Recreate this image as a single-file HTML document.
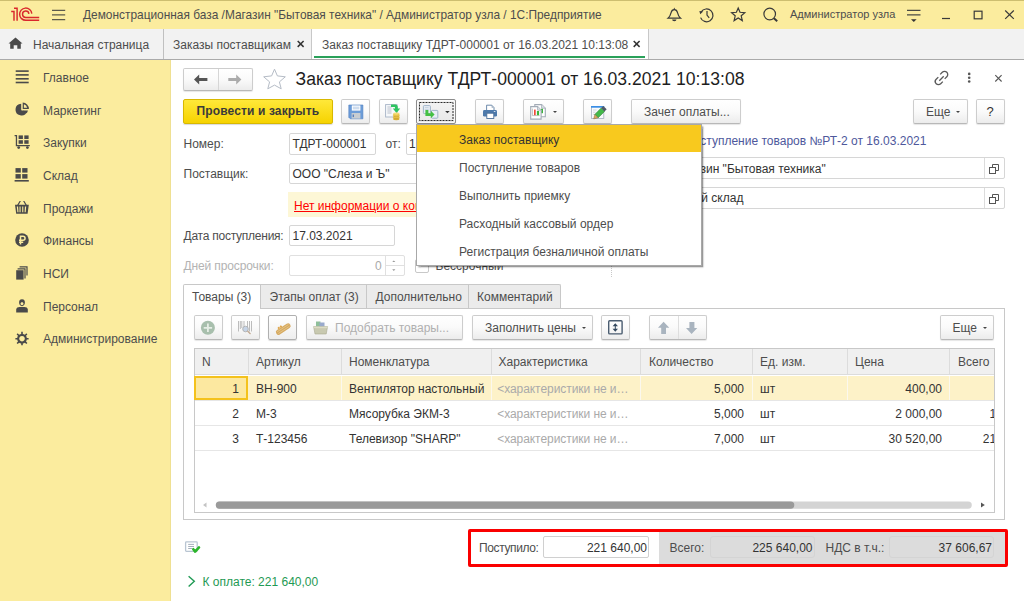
<!DOCTYPE html>
<html><head><meta charset="utf-8">
<style>
*{box-sizing:border-box}
html,body{margin:0;padding:0}
body{width:1024px;height:601px;overflow:hidden;position:relative;background:#fff;font-family:"Liberation Sans",sans-serif;font-size:12px;color:#4d4d4d}
.a{position:absolute}
.t{position:absolute;white-space:nowrap;line-height:14px}
svg{position:absolute;overflow:visible}
#top{left:0;top:0;width:1024px;height:29px;background:#fbec9e;border-top:1px solid #cdbe70}
#tabs{left:0;top:29px;width:1024px;height:31px;background:#f2f2f2;border-bottom:1px solid #aaa}
#side{left:0;top:60px;width:171px;height:541px;background:#fbec9e;border-right:1px solid #efe092}
.btn{position:absolute;background:linear-gradient(#fff 0%,#fafafa 50%,#ececec 100%);border:1px solid #cdcdcd;border-bottom-color:#b8b8b8;border-radius:2px;box-shadow:0 1px 1px rgba(0,0,0,.10)}
.inp{position:absolute;background:#fff;border:1px solid #d6d6d6;border-radius:2px}
.dd{position:absolute;width:0;height:0;border-left:2.3px solid transparent;border-right:2.3px solid transparent;border-top:2.4px solid #444}
.sitem{position:absolute;left:43px;white-space:nowrap;line-height:14px;color:#4d4d4d}
</style></head><body>

<!-- TOP BAR -->
<div id="top" class="a"></div>
<svg style="left:0;top:0" width="45" height="29" viewBox="0 0 45 29">
  <g fill="none" stroke="#d9272c" stroke-width="1.45">
    <path d="M11.2 11.4 H14 V20.8"/>
    <path d="M14 8.3 H17.1 V20.8"/>
    <path d="M31.8 13.6 A6.1 6.1 0 1 0 25.8 20.3 H39.2"/>
    <path d="M28.9 13.8 A3.2 3.2 0 1 0 25.8 17.4 H39.2"/>
  </g>
</svg>
<svg style="left:0;top:0" width="70" height="29" viewBox="0 0 70 29">
  <g stroke="#5c5a4c" stroke-width="1.3"><path d="M52 10.3H65.2M52 14.9H65.2M52 19.7H65.2"/></g>
</svg>
<div class="t" style="left:83px;top:8px;font-size:11.9px;color:#4d4d4d">Демонстрационная база /Магазин "Бытовая техника" / Администратор узла / 1С:Предприятие</div>

<!-- top right icons -->
<svg style="left:660px;top:0" width="130" height="29" viewBox="660 0 130 29">
  <g fill="none" stroke="#3a3a3a" stroke-width="1.2">
    <!-- bell -->
    <path d="M674.3 9.6 C672.3 9.6 671.5 10.8 671.1 12.6 C670.5 15.3 669.7 16.7 668 18.2 H680.6 C678.9 16.7 678.1 15.3 677.5 12.6 C677.1 10.8 676.3 9.6 674.3 9.6Z"/>
    <!-- history -->
    <path d="M701.2 11.9 A6.4 6.4 0 1 1 700.6 17.6"/>
    <path d="M707 10.9 V15.1 L709.2 17.8"/>
    <!-- star -->
    <path d="M738.2 8 L740 12.3 L744.8 12.7 L741.2 15.8 L742.3 20.6 L738.2 18 L734.1 20.6 L735.2 15.8 L731.6 12.7 L736.4 12.3Z"/>
    <!-- search -->
    <circle cx="769.7" cy="14" r="5.8"/>
    <path d="M773.9 18.2 L777.2 21.3" stroke-width="2"/>
  </g>
  <path d="M699.4 10.9 L703.2 11.6 L700.2 14.2Z" fill="#3a3a3a"/><path d="M674.3 7.6 L675.2 9.6 H673.4Z M672.1 19.6 H676.5 A2.2 1.6 0 0 1 672.1 19.6Z" fill="#3a3a3a"/>
</svg>
<div class="t" style="left:790px;top:6.8px;font-size:11px;color:#4d4d4d">Администратор узла</div>
<svg style="left:900px;top:0" width="124" height="29" viewBox="900 0 124 29">
  <g fill="none" stroke="#4a4a44" stroke-width="1.2">
    <path d="M907 10.3 H920.5 M907 14.8 H920.5"/>
  </g>
  <path d="M911 19.2 H916.6 L913.8 22Z" fill="#333"/>
  <g fill="none" stroke="#3a3a3a" stroke-width="1.2">
    <path d="M942 18.5 H950"/>
    <rect x="974.2" y="11.2" width="7.8" height="7.6"/>
    <path d="M1005.2 10.5 L1013.8 18.9 M1013.8 10.5 L1005.2 18.9"/>
  </g>
</svg>

<!-- TAB BAR -->
<div id="tabs" class="a"></div>
<svg style="left:0;top:29px" width="30" height="30" viewBox="0 29 30 30">
  <path d="M15.5 37.6 L22.5 43.4 H20.8 V48.7 H17.3 V45.2 H13.7 V48.7 H10.2 V43.4 H8.5Z" fill="#4a4a4a"/>
</svg>
<div class="t" style="left:33px;top:38px;color:#4d4d4d">Начальная страница</div>
<div class="a" style="left:163px;top:29px;width:1px;height:30px;background:#c0c0c0"></div>
<div class="t" style="left:173px;top:38px;color:#4d4d4d">Заказы поставщикам</div>
<svg style="left:295px;top:38px" width="12" height="12" viewBox="0 0 12 12"><path d="M2.7 3 L8.6 8.9 M8.6 3 L2.7 8.9" stroke="#333" stroke-width="1.5"/></svg>
<div class="a" style="left:311px;top:29px;width:338px;height:30px;background:#fff;border-left:1px solid #c8c8c8;border-right:1px solid #c8c8c8"></div>
<div class="a" style="left:314px;top:56px;width:331px;height:2px;background:#2aa15a"></div>
<div class="t" style="left:322px;top:38px;color:#4d4d4d">Заказ поставщику ТДРТ-000001 от 16.03.2021 10:13:08</div>
<svg style="left:631px;top:38px" width="12" height="12" viewBox="0 0 12 12"><path d="M2.7 3 L8.6 8.9 M8.6 3 L2.7 8.9" stroke="#333" stroke-width="1.5"/></svg>

<!-- SIDEBAR -->
<div id="side" class="a"></div>
<svg style="left:0;top:60px" width="40" height="300" viewBox="0 60 40 300">
  <g fill="#4a4a4a">
    <!-- Главное -->
    <rect x="15.7" y="70.3" width="13" height="1.6"/>
    <rect x="15.7" y="74.1" width="13" height="1.6"/>
    <rect x="15.7" y="78" width="13" height="1.6"/>
    <rect x="15.7" y="81.7" width="13" height="1.6"/>
    <!-- Маркетинг -->
    <path d="M21.2 103.7 A5.9 5.9 0 1 0 27 111.5 L21.2 110.2Z"/>
    <path d="M22.7 102.6 V109 H28.9 A6.4 6.4 0 0 0 22.7 102.6Z M23.9 104.2 A5 5 0 0 1 27.2 107.8 H23.9Z" fill-rule="evenodd"/>
    <path d="M22.6 110.6 L27.9 110.6 A6 6 0 0 1 26.6 113.2Z"/>
    <!-- Закупки -->
    <path d="M14.6 135 H17.1 V145 H29.8 V146.3 H15.8 V136.2 H14.6Z"/>
    <rect x="18.6" y="135.4" width="4.3" height="3.6"/>
    <rect x="24.3" y="135.4" width="4.3" height="3.6"/>
    <rect x="18.6" y="140.2" width="4.3" height="3.6"/>
    <rect x="24.3" y="140.2" width="4.3" height="3.6"/>
    <circle cx="18.7" cy="147.6" r="1.4"/>
    <circle cx="27.4" cy="147.6" r="1.4"/>
    <!-- Склад -->
    <rect x="15.5" y="168.1" width="5.3" height="4.5"/>
    <rect x="22.2" y="168.1" width="5.3" height="4.5"/>
    <rect x="15.5" y="174.1" width="5.3" height="4.5"/>
    <rect x="22.2" y="174.1" width="5.3" height="4.5"/>
    <rect x="14.6" y="180" width="14.2" height="1.6"/>
    <!-- Продажи -->
    <path d="M15 204.8 H28.8 L27.6 213.7 H16.2Z M16.8 206.4 L17.4 212.2 H18.5 L18.1 206.4Z M19.5 206.4 V212.2 H20.6 V206.4Z M22.2 206.4 V212.2 H23.3 V206.4Z M24.9 206.4 L24.6 212.2 H25.7 L26.2 206.4Z" fill-rule="evenodd"/>
    <path d="M17.2 204.9 L19.6 200.9 H20.9 L18.6 204.9Z M25.4 204.9 L23.1 200.9 H24.4 L26.8 204.9Z"/>
    <!-- Финансы -->
    <circle cx="22" cy="240" r="6.8"/>
    <!-- НСИ -->
    <rect x="16.2" y="270.2" width="7.4" height="9.4"/>
    <path d="M17.6 268.2 H25.6 V278.6 H24.4 V269.4 H17.6Z"/>
    <path d="M19.6 266.2 H27.6 V275.6 H26.4 V267.4 H19.6Z"/>
    <!-- Персонал -->
    <path d="M22 299.3 C19.6 299.3 19.1 301 19.1 302.6 C19.1 304.6 20.3 306.2 22 306.2 C23.7 306.2 24.9 304.6 24.9 302.6 C24.9 301 24.4 299.3 22 299.3Z M22 302.2 C23 302.2 23.5 302.9 23.5 303.6 C23.5 304.7 22.8 305.2 22 305.2 C21.2 305.2 20.5 304.7 20.5 303.6 C20.5 302.9 21 302.2 22 302.2Z" fill-rule="evenodd"/>
    <path d="M16.2 312.4 V309.5 C16.2 307.8 18 307 19.5 307 H24.5 C26 307 27.8 307.8 27.8 309.5 V312.4Z"/>
    <!-- Администрирование -->
    <path d="M21.2 331.8 H22.8 V333.9 A4.6 4.6 0 0 1 24.9 334.7 L26.3 333.3 L27.4 334.4 L26 335.8 A4.6 4.6 0 0 1 26.8 337.9 H28.6 V339.5 H26.8 A4.6 4.6 0 0 1 26 341.6 L27.4 343 L26.3 344.1 L24.9 342.7 A4.6 4.6 0 0 1 22.8 343.5 V345.3 H21.2 V343.5 A4.6 4.6 0 0 1 19.1 342.7 L17.7 344.1 L16.6 343 L18 341.6 A4.6 4.6 0 0 1 17.2 339.5 H15.4 V337.9 H17.2 A4.6 4.6 0 0 1 18 335.8 L16.6 334.4 L17.7 333.3 L19.1 334.7 A4.6 4.6 0 0 1 21.2 333.9Z M22 335.9 A2.8 2.8 0 1 0 22.01 335.9Z" fill-rule="evenodd"/>
  </g>
  <g fill="none" stroke="#fbec9e" stroke-width="1.5">
    <path d="M20.5 244.6 V236.2 H23 A2.05 2.05 0 0 1 23 240.3 H19 M19 242.3 H23.2"/>
  </g>
</svg>
<div class="sitem" style="top:71px">Главное</div>
<div class="sitem" style="top:103.5px">Маркетинг</div>
<div class="sitem" style="top:136px">Закупки</div>
<div class="sitem" style="top:169px">Склад</div>
<div class="sitem" style="top:201.5px">Продажи</div>
<div class="sitem" style="top:234px">Финансы</div>
<div class="sitem" style="top:267px">НСИ</div>
<div class="sitem" style="top:299.5px">Персонал</div>
<div class="sitem" style="top:332px">Администрирование</div>

<!-- FORM -->
<!-- nav buttons -->
<div class="btn" style="left:183px;top:68px;width:70px;height:23px"></div>
<div class="a" style="left:218px;top:69px;width:1px;height:21px;background:#d6d6d6"></div>
<svg style="left:190px;top:70px" width="60" height="20" viewBox="190 70 60 20">
  <path d="M194 79.4 L199.2 74.4 V78 H207.4 V80.9 H199.2 V84.4Z" fill="#555"/>
  <path d="M241.4 79.4 L236.2 74.4 V78 H228.3 V80.9 H236.2 V84.4Z" fill="#ababab"/>
</svg>
<svg style="left:260px;top:66px" width="30" height="26" viewBox="260 66 30 26">
  <path d="M274.5 69.2 L277.4 75.9 L285.3 76.8 L279.4 81.9 L281.2 88.8 L274.5 85.1 L267.8 88.8 L269.6 81.9 L263.7 76.8 L271.6 75.9Z" fill="none" stroke="#b5bcc6" stroke-width="1"/>
</svg>
<div class="t" style="left:295.5px;top:69px;font-size:17.6px;line-height:20px;color:#1e1e1e">Заказ поставщику ТДРТ-000001 от 16.03.2021 10:13:08</div>
<svg style="left:930px;top:66px" width="80" height="24" viewBox="930 66 80 24">
  <g fill="none" stroke="#5a5a5a" stroke-width="1.3">
    <path d="M940.2 74.4 L942.3 72.3 A2.6 2.6 0 0 1 946.8 76.8 L944.7 78.9"/>
    <path d="M942.8 81.6 L940.7 83.7 A2.6 2.6 0 0 1 936.2 79.2 L938.3 77.1"/>
    <path d="M939.3 80.7 L943.7 76.3"/>
    <path d="M995.3 75.2 L1001.6 81.5 M1001.6 75.2 L995.3 81.5" stroke="#555" stroke-width="1.1"/>
  </g>
  <g fill="#555"><circle cx="969.2" cy="73.9" r="1.3"/><circle cx="969.2" cy="77.7" r="1.3"/><circle cx="969.2" cy="81.5" r="1.3"/></g>
</svg>

<!-- command bar -->
<div class="a" style="left:183px;top:99px;width:150px;height:25px;border:1px solid #d8b800;border-radius:2px;background:linear-gradient(#ffe83a,#f6d300);box-shadow:0 1px 1px rgba(0,0,0,.15)"></div>
<div class="t" style="left:196.5px;top:104px;font-weight:bold;color:#3a3a3a;letter-spacing:0.13px">Провести и закрыть</div>

<div class="btn" style="left:341px;top:99px;width:29px;height:25px"></div>
<svg style="left:348px;top:104px" width="16" height="16" viewBox="348 104 16 16">
  <path d="M348.8 105 H362.9 V118.8 H350.3 L348.8 117.3Z" fill="#6c9cd8" stroke="#4f7fc0" stroke-width="0.6"/>
  <rect x="351.8" y="105.4" width="8.6" height="5.2" fill="#fff"/>
  <path d="M352.8 107.2 H359.4 M352.8 108.8 H359.4" stroke="#9bb8dc" stroke-width="0.7"/>
  <rect x="351.6" y="113" width="8.8" height="5.6" fill="#c8cdd2"/>
  <rect x="352.6" y="114.5" width="1.4" height="2.6" fill="#5a7fb8"/>
</svg>

<div class="btn" style="left:379px;top:99px;width:29px;height:25px"></div>
<svg style="left:384px;top:103px" width="18" height="18" viewBox="384 103 18 18">
  <rect x="385.6" y="104.6" width="11.4" height="12.4" fill="#f6f8fa" stroke="#a6b4c6" stroke-width="0.9"/>
  <path d="M387.4 107 H391.5 M387.4 109 H391.5 M387.4 111 H391.5 M387.4 113 H391.5" stroke="#a0aab8" stroke-width="0.7"/>
  <path d="M391 104.4 H395.2 C396.8 104.4 397.8 105.4 397.8 107 V108.4 H400.2 L396.5 113 L392.8 108.4 H395 V107.4 C395 107.1 394.8 106.9 394.5 106.9 H391Z" fill="#2ec460"/>
  <rect x="393.2" y="113.6" width="6.2" height="5.6" fill="#e8c34a"/>
  <ellipse cx="396.3" cy="119.2" rx="3.1" ry="1.1" fill="#d9ad36"/>
  <ellipse cx="396.3" cy="113.6" rx="3.1" ry="1.1" fill="#f5dc7a"/>
  <path d="M393.2 115.6 A3.1 1.1 0 0 0 399.4 115.6 M393.2 117.4 A3.1 1.1 0 0 0 399.4 117.4" fill="none" stroke="#c9a030" stroke-width="0.5"/>
</svg>

<div class="a" style="left:416px;top:99px;width:40px;height:25px;border:1px solid #8c8c8c;border-radius:2px;background:linear-gradient(#f4f4f4,#e8e8e8);box-shadow:inset 0 0 0 1px #fafafa, 0 1px 1px rgba(0,0,0,.15)"></div>
<svg style="left:418px;top:101px" width="38" height="22" viewBox="418 101 38 22"><rect x="419.5" y="102.5" width="33.5" height="18" fill="none" stroke="#2a2a2a" stroke-width="1" stroke-dasharray="2 1"/></svg>
<svg style="left:421px;top:103px" width="20" height="18" viewBox="421 103 20 18">
  <rect x="423.4" y="105.6" width="7" height="8" rx="0.8" fill="#e8eef5" stroke="#9fb3c9" stroke-width="1"/>
  <path d="M424.8 107.6 H428.6 M424.8 109.4 H428.6" stroke="#b8c8d8" stroke-width="0.7"/>
  <rect x="431.4" y="110.4" width="6.4" height="7.8" rx="0.8" fill="#e8eef5" stroke="#9fb3c9" stroke-width="1"/>
  <path d="M425.4 110 H428.4 V113.2 H430.8 V110.8 L434.6 114.6 L430.8 118.2 V116 H425.4Z" fill="#44c044"/>
</svg>
<svg style="left:443px;top:109px" width="8" height="6" viewBox="443 109 8 6"><path d="M445.1 110.9 H449.7 L447.4 113.2Z" fill="#333"/></svg>

<div class="btn" style="left:475px;top:99px;width:29px;height:25px"></div>
<svg style="left:482px;top:103px" width="18" height="18" viewBox="482 103 18 18">
  <path d="M486.6 105.2 H491.8 L494 107.6 V110.5 H486.6Z" fill="#fff" stroke="#4a6e98" stroke-width="0.8"/>
  <path d="M491.6 105.4 V107.8 H493.8Z" fill="#9aaabb"/>
  <rect x="483" y="110" width="14" height="6.6" rx="1.4" fill="#4d79aa"/>
  <rect x="486.8" y="113.2" width="7" height="5.3" fill="#fff" stroke="#4a6e98" stroke-width="0.9"/>
  <rect x="493.8" y="111" width="1.6" height="0.9" fill="#dfe8f2"/>
</svg>

<div class="btn" style="left:523px;top:99px;width:41px;height:25px"></div>
<svg style="left:528px;top:102px" width="20" height="20" viewBox="528 102 20 20">
  <path d="M534.8 104.6 H541.6 L545.3 108.2 V116.8 H534.8Z" fill="#fff" stroke="#a2abb6" stroke-width="1.1"/>
  <path d="M541.6 104.6 V108.2 H545.3" fill="#dfe3e8" stroke="#a2abb6" stroke-width="0.8"/>
  <rect x="541" y="108.8" width="2" height="4.4" fill="#3cb43c"/>
  <path d="M530.7 106.6 H537.6 L541.1 110.2 V119.1 H530.7Z" fill="#fff" stroke="#a2abb6" stroke-width="1.1"/>
  <path d="M537.6 106.6 V110.2 H541.1" fill="#dfe3e8" stroke="#a2abb6" stroke-width="0.8"/>
  <path d="M532.4 108.6 V115.6 H539.6" fill="none" stroke="#a9a9a9" stroke-width="0.7"/>
  <rect x="534" y="109.6" width="1.7" height="5.6" fill="#f04a3a"/>
  <rect x="536.9" y="111" width="2.2" height="4.2" fill="#3cb43c"/>
</svg>
<div class="dd" style="left:552.8px;top:111.2px"></div>

<div class="btn" style="left:583px;top:99px;width:29px;height:25px"></div>
<svg style="left:589px;top:103px" width="18" height="18" viewBox="589 103 18 18">
  <rect x="591.4" y="106.4" width="12.4" height="12" fill="#f8fafc" stroke="#a4b0c0" stroke-width="0.8"/>
  <rect x="591" y="106" width="13.2" height="1.7" fill="#3a8ee6"/>
  <path d="M593 110 H596.5 M593 112.2 H595.5 M593 114.4 H594.5" stroke="#b8c0cc" stroke-width="0.6"/>
  <g transform="rotate(-45 599.6 113)">
    <rect x="595.2" y="110.6" width="9" height="4.8" fill="#43b84a" stroke="#2f7a36" stroke-width="0.5"/>
    <rect x="604.2" y="110.6" width="3" height="4.8" fill="#505a66"/>
    <path d="M595.2 110.6 L591.2 113 L595.2 115.4Z" fill="#d9a860" stroke="#7a5a30" stroke-width="0.4"/>
  </g>
</svg>

<div class="btn" style="left:631px;top:99px;width:110px;height:25px"></div>
<div class="t" style="left:644px;top:105px;color:#4d4d4d">Зачет оплаты...</div>

<div class="btn" style="left:913px;top:99px;width:55px;height:25px"></div>
<div class="t" style="left:926px;top:105px;color:#4d4d4d">Еще</div>
<div class="dd" style="left:956.2px;top:111.3px"></div>
<div class="btn" style="left:976px;top:99px;width:29px;height:25px"></div>
<div class="t" style="left:986.6px;top:104px;font-size:13px;line-height:16px;color:#333">?</div>

<!-- fields -->
<div class="t" style="left:183.5px;top:137px">Номер:</div>
<div class="inp" style="left:289px;top:133px;width:87px;height:22px"></div>
<div class="t" style="left:292.5px;top:137px;color:#333">ТДРТ-000001</div>
<div class="t" style="left:385.5px;top:137px">от:</div>
<div class="inp" style="left:405.5px;top:133px;width:100px;height:22px"></div>
<div class="t" style="left:409px;top:137px;color:#333">16.03.2021</div>

<div class="t" style="left:183.5px;top:166.5px">Поставщик:</div>
<div class="inp" style="left:289px;top:163px;width:300px;height:21px"></div>
<div class="t" style="left:292.5px;top:166.5px;color:#333">ООО "Слеза и Ъ"</div>

<div class="a" style="left:287.5px;top:192px;width:300px;height:25px;background:#fdf7d6"></div>
<div class="t" style="left:294px;top:198.5px;color:#f00;text-decoration:underline">Нет информации о контактном лице</div>

<div class="t" style="left:183.5px;top:229px;letter-spacing:-0.24px">Дата поступления:</div>
<div class="inp" style="left:289px;top:225px;width:106px;height:21px"></div>
<div class="t" style="left:292.5px;top:229px;color:#333">17.03.2021</div>

<div class="t" style="left:183.5px;top:259px;color:#b3b3b3;letter-spacing:-0.12px">Дней просрочки:</div>
<div class="inp" style="left:289px;top:255px;width:116px;height:21px;border-color:#e0e0e0"></div>
<div class="a" style="left:384.5px;top:256px;width:1px;height:19px;background:#e0e0e0"></div>
<div class="a" style="left:385px;top:265px;width:19px;height:1px;background:#e0e0e0"></div>
<div class="t" style="left:375px;top:259px;color:#aaa">0</div>
<svg style="left:385px;top:256px" width="20" height="20" viewBox="385 256 20 20">
  <path d="M392.2 262 H395.4 L393.8 260.4Z M392.2 269.3 H395.4 L393.8 270.9Z" fill="#999"/>
</svg>
<div class="a" style="left:415px;top:259px;width:14px;height:14px;border:1px solid #c8c8c8;border-radius:2px;background:#fff"></div>
<div class="t" style="left:435.5px;top:259px;color:#4d4d4d">Бессрочный</div>

<!-- right column -->
<div class="t" style="left:685px;top:133.5px;color:#4e589c">Поступление товаров №РТ-2 от 16.03.2021</div>
<div class="inp" style="left:660px;top:157px;width:345px;height:22px"></div>
<div class="a" style="left:984px;top:158px;width:1px;height:20px;background:#dcdcdc"></div>
<div class="t" style="left:673px;top:161.5px;color:#333">Магазин "Бытовая техника"</div>
<div class="inp" style="left:660px;top:187px;width:345px;height:22px"></div>
<div class="a" style="left:984px;top:188px;width:1px;height:20px;background:#dcdcdc"></div>
<div class="t" style="left:653px;top:191px;color:#333">Основной склад</div>
<svg style="left:986px;top:158px" width="18" height="50" viewBox="986 158 18 50">
  <g fill="none" stroke="#555" stroke-width="1">
    <path d="M992.5 167.5 V164.5 H998.5 V170.5 H995.5"/><rect x="989.5" y="167.5" width="6" height="6"/>
    <path d="M992.5 197.5 V194.5 H998.5 V200.5 H995.5"/><rect x="989.5" y="197.5" width="6" height="6"/>
  </g>
</svg>

<!-- tabs -->
<div class="a" style="left:183px;top:308px;width:822px;height:212px;border:1px solid #c8c8c8"></div>
<div class="a" style="left:260px;top:284px;width:107px;height:24px;background:#ebebeb;border:1px solid #c8c8c8;border-bottom:none"></div>
<div class="a" style="left:366px;top:284px;width:103px;height:24px;background:#ebebeb;border:1px solid #c8c8c8;border-bottom:none"></div>
<div class="a" style="left:468px;top:284px;width:93px;height:24px;background:#ebebeb;border:1px solid #c8c8c8;border-bottom:none;border-radius:0 2px 0 0"></div>
<div class="a" style="left:183px;top:284px;width:78px;height:25px;background:#fff;border:1px solid #c8c8c8;border-bottom:none;border-radius:2px 0 0 0"></div>
<div class="t" style="left:192px;top:289.5px">Товары (3)</div>
<div class="t" style="left:269.5px;top:289.5px">Этапы оплат (3)</div>
<div class="t" style="left:375.5px;top:289.5px">Дополнительно</div>
<div class="t" style="left:477px;top:289.5px">Комментарий</div>

<!-- panel toolbar -->
<div class="btn" style="left:193.5px;top:315px;width:29px;height:25px"></div>
<svg style="left:199px;top:319px" width="18" height="18" viewBox="199 319 18 18">
  <circle cx="207.9" cy="327.8" r="7" fill="#a8bfad"/>
  <path d="M207.9 323.6 V332 M203.7 327.8 H212.1" stroke="#e6eee6" stroke-width="1.8"/>
</svg>
<div class="btn" style="left:231px;top:315px;width:29px;height:25px"></div>
<svg style="left:236px;top:319px" width="20" height="18" viewBox="236 319 20 18">
  <path d="M238.5 321 V331.5 M240.3 321 V329 M241.8 321 V328 M244 321 V327 M247.5 321 V327.5 M249.5 321 V331.5 M251.5 321 V331.5" stroke="#b4b4b4" stroke-width="0.9"/>
  <circle cx="245.5" cy="329" r="2.8" fill="#c6d4e6" stroke="#a9a9a9" stroke-width="0.8"/>
  <path d="M247.5 331 L250.5 334" stroke="#c0a890" stroke-width="1.3"/>
</svg>
<div class="a" style="left:268px;top:315px;width:29px;height:25px;border:1px solid #b0b0b0;border-radius:2px;background:linear-gradient(#fff,#eee);box-shadow:0 1px 1px rgba(0,0,0,.15)"></div>
<svg style="left:272px;top:318px" width="22" height="20" viewBox="272 318 22 20">
  <g transform="rotate(-33 283 329)">
    <rect x="275" y="326.6" width="16.4" height="5.2" rx="2.4" fill="#d6aa62"/>
    <path d="M276.5 328.2 H290 M276.5 330.2 H290" stroke="#f0d49c" stroke-width="0.7" opacity="0.8"/>
    <circle cx="280" cy="325.8" r="1.1" fill="#e0a850"/>
    <circle cx="282.6" cy="325.8" r="1.1" fill="#e0a850"/>
  </g>
</svg>
<div class="btn" style="left:306px;top:315px;width:157px;height:25px"></div>
<svg style="left:312px;top:320px" width="18" height="16" viewBox="312 320 18 16">
  <rect x="316" y="321.5" width="4.5" height="5" fill="#8fbf9a"/>
  <rect x="319.5" y="322.5" width="5" height="4.5" fill="#99aacc"/>
  <path d="M313.6 326.6 H327.6 L326.2 334 H315Z" fill="#c8c9b0" stroke="#a7a88e" stroke-width="0.6"/>
  <path d="M313.6 326.6 H327.6 V328.2 H313.6Z" fill="#dcdcc4"/>
</svg>
<div class="t" style="left:335px;top:321px;color:#b0b0b0">Подобрать товары...</div>
<div class="btn" style="left:472px;top:315px;width:121px;height:25px"></div>
<div class="t" style="left:485px;top:321px">Заполнить цены</div>
<div class="dd" style="left:581.5px;top:327px"></div>
<div class="btn" style="left:601px;top:315px;width:29px;height:25px"></div>
<svg style="left:606px;top:319px" width="18" height="18" viewBox="606 319 18 18">
  <rect x="608.7" y="320.7" width="13.4" height="13.2" rx="1" fill="none" stroke="#4a5c70" stroke-width="1.4"/>
  <path d="M615.3 324.5 V330.5" stroke="#33485e" stroke-width="1"/>
  <path d="M612.6 326.2 L615.3 323.2 L618 326.2Z M612.6 328.8 L615.3 331.8 L618 328.8Z" fill="#33485e"/>
</svg>
<div class="btn" style="left:649px;top:315px;width:58px;height:25px"></div>
<div class="a" style="left:678px;top:316px;width:1px;height:23px;background:#dedede"></div>
<svg style="left:655px;top:319px" width="46" height="18" viewBox="655 319 46 18">
  <path d="M663.6 321.7 L669.3 327.7 H666 V333.9 H661.2 V327.7 H658Z" fill="#a9b4bf"/>
  <path d="M691.6 333.9 L697.3 328 H694.4 V322 H689.4 V328 H686Z" fill="#a9b4bf"/>
</svg>
<div class="btn" style="left:939.5px;top:315px;width:54px;height:25px"></div>
<div class="t" style="left:952.5px;top:321px">Еще</div>
<div class="dd" style="left:983px;top:327px"></div>

<!-- table -->
<div class="a" style="left:193.5px;top:348px;width:801px;height:165px;border:1px solid #c8c8c8;background:#fff"></div>
<div class="a" style="left:194.5px;top:349px;width:799px;height:26px;background:#f0f0f0;border-bottom:1px solid #dcdcdc"></div>
<div class="a" style="left:247.5px;top:349px;width:1px;height:26px;background:#dcdcdc"></div>
<div class="a" style="left:340.5px;top:349px;width:1px;height:26px;background:#dcdcdc"></div>
<div class="a" style="left:490.5px;top:349px;width:1px;height:26px;background:#dcdcdc"></div>
<div class="a" style="left:640px;top:349px;width:1px;height:26px;background:#dcdcdc"></div>
<div class="a" style="left:751.5px;top:349px;width:1px;height:26px;background:#dcdcdc"></div>
<div class="a" style="left:847px;top:349px;width:1px;height:26px;background:#dcdcdc"></div>
<div class="a" style="left:949px;top:349px;width:1px;height:26px;background:#dcdcdc"></div>
<div class="t" style="left:202px;top:355px">N</div>
<div class="t" style="left:256px;top:355px">Артикул</div>
<div class="t" style="left:349px;top:355px">Номенклатура</div>
<div class="t" style="left:498.5px;top:355px">Характеристика</div>
<div class="t" style="left:649px;top:355px">Количество</div>
<div class="t" style="left:760px;top:355px">Ед. изм.</div>
<div class="t" style="left:855px;top:355px">Цена</div>
<div class="t" style="left:958px;top:355px">Всего</div>

<!-- row 1 selected -->
<div class="a" style="left:194.5px;top:376px;width:799px;height:24px;background:#fdf2c8"></div>
<div class="a" style="left:340.5px;top:376px;width:1px;height:24px;background:#fbf8ee"></div>
<div class="a" style="left:490.5px;top:376px;width:1px;height:24px;background:#fbf8ee"></div>
<div class="a" style="left:640px;top:376px;width:1px;height:24px;background:#fbf8ee"></div>
<div class="a" style="left:751.5px;top:376px;width:1px;height:24px;background:#fbf8ee"></div>
<div class="a" style="left:847px;top:376px;width:1px;height:24px;background:#fbf8ee"></div>
<div class="a" style="left:949px;top:376px;width:1px;height:24px;background:#fbf8ee"></div>
<div class="a" style="left:194px;top:376px;width:54px;height:24px;background:#fce8a0;border:2px solid #f4c21c"></div>
<div class="a" style="left:194.5px;top:425px;width:799px;height:1px;background:#e6e6e6"></div>
<div class="a" style="left:194.5px;top:450px;width:799px;height:1px;background:#e6e6e6"></div>
<div class="a" style="left:194.5px;top:400px;width:799px;height:1px;background:#e6e6e6"></div>

<div class="t" style="left:200px;top:381.5px;width:39px;text-align:right;color:#333">1</div>
<div class="t" style="left:256px;top:381.5px;color:#333">ВН-900</div>
<div class="t" style="left:349px;top:381.5px;color:#333">Вентилятор настольный</div>
<div class="t" style="left:497.2px;top:381.5px;color:#aaa;letter-spacing:-0.06px">&lt;характеристики не и…</div>
<div class="t" style="left:650px;top:381.5px;width:94px;text-align:right;color:#333">5,000</div>
<div class="t" style="left:760px;top:381.5px;color:#333">шт</div>
<div class="t" style="left:850px;top:381.5px;width:92px;text-align:right;color:#333">400,00</div>

<div class="t" style="left:200px;top:406.5px;width:39px;text-align:right;color:#333">2</div>
<div class="t" style="left:256px;top:406.5px;color:#333">М-3</div>
<div class="t" style="left:349px;top:406.5px;color:#333">Мясорубка ЭКМ-3</div>
<div class="t" style="left:497.2px;top:406.5px;color:#aaa;letter-spacing:-0.06px">&lt;характеристики не и…</div>
<div class="t" style="left:650px;top:406.5px;width:94px;text-align:right;color:#333">5,000</div>
<div class="t" style="left:760px;top:406.5px;color:#333">шт</div>
<div class="t" style="left:850px;top:406.5px;width:92px;text-align:right;color:#333">2 000,00</div>
<div class="a" style="left:950px;top:400px;width:43.5px;height:50px;overflow:hidden">
  <div class="t" style="left:0;top:6.5px;width:92.8px;text-align:right;color:#333">10 000,00</div>
  <div class="t" style="left:0;top:31.5px;width:92.8px;text-align:right;color:#333">213 640,00</div>
</div>

<div class="t" style="left:200px;top:431.5px;width:39px;text-align:right;color:#333">3</div>
<div class="t" style="left:256px;top:431.5px;color:#333">Т-123456</div>
<div class="t" style="left:349px;top:431.5px;color:#333">Телевизор "SHARP"</div>
<div class="t" style="left:497.2px;top:431.5px;color:#aaa;letter-spacing:-0.06px">&lt;характеристики не и…</div>
<div class="t" style="left:650px;top:431.5px;width:94px;text-align:right;color:#333">7,000</div>
<div class="t" style="left:760px;top:431.5px;color:#333">шт</div>
<div class="t" style="left:850px;top:431.5px;width:92px;text-align:right;color:#333">30 520,00</div>

<!-- scrollbar -->
<svg style="left:195px;top:498px" width="798" height="14" viewBox="195 498 798 14">
  <path d="M206.5 502.5 V507.5 L203 505Z" fill="#c4c4c4"/>
  <rect x="215.8" y="501.5" width="756" height="7.2" rx="3.6" fill="#d4d4d4"/>
  <rect x="215.8" y="501.5" width="578.5" height="7.2" rx="3.6" fill="#9a9a9a"/>
  <path d="M981 502.6 V507.4 L984.8 505Z" fill="#555"/>
</svg>

<!-- totals -->
<div class="a" style="left:659px;top:532px;width:346px;height:32px;background:#dcdcdc"></div>
<div class="t" style="left:479px;top:541px;letter-spacing:-0.38px">Поступило:</div>
<div class="inp" style="left:543px;top:536px;width:106px;height:22px;border-color:#d0d0d0"></div>
<div class="t" style="left:545px;top:541px;width:102px;text-align:right;color:#333">221 640,00</div>
<div class="t" style="left:669.5px;top:541px">Всего:</div>
<div class="a" style="left:709.5px;top:536px;width:105px;height:22px;border:1px solid #d4d4d4;border-radius:3px"></div>
<div class="t" style="left:710px;top:541px;width:102.5px;text-align:right;color:#333">225 640,00</div>
<div class="t" style="left:825.5px;top:541px">НДС в т.ч.:</div>
<div class="a" style="left:889px;top:536px;width:105px;height:22px;border:1px solid #d4d4d4;border-radius:3px"></div>
<div class="t" style="left:890px;top:541px;width:102px;text-align:right;color:#333">37 606,67</div>
<div class="a" style="left:467.5px;top:529px;width:540px;height:38px;border:3px solid #fa0000;border-radius:2px"></div>

<!-- bottom -->
<svg style="left:183px;top:539px" width="20" height="16" viewBox="183 539 20 16">
  <rect x="185.6" y="541.9" width="11.6" height="9.4" rx="0.8" fill="#fff" stroke="#b9c5d2" stroke-width="1.3"/>
  <path d="M188.2 544.4 H194 M188.2 546.5 H194 M188.2 548.5 H192" stroke="#9ba6b4" stroke-width="0.9"/>
  <path d="M193.3 549.2 L195.2 551.6 L199 547.4" fill="none" stroke="#2cb52c" stroke-width="2.6" stroke-linecap="round" stroke-linejoin="round"/>
</svg>
<svg style="left:186px;top:574px" width="12" height="14" viewBox="186 574 12 14">
  <path d="M188.6 576.2 L194.3 581.3 L188.6 586.4" fill="none" stroke="#1f9a54" stroke-width="1.4"/>
</svg>
<div class="t" style="left:202.5px;top:574.5px;color:#1f9a54">К оплате: 221 640,00</div>

<div class="a" style="left:610.5px;top:266px;width:1px;height:11px;border-left:1px dotted #c8c8c8"></div>
<!-- dropdown menu -->
<div class="a" style="left:416px;top:124px;width:286px;height:142px;background:#fff;border:1px solid #a8a8a8;box-shadow:1.5px 1.5px 1.5px rgba(0,0,0,.4)"></div>
<div class="a" style="left:417px;top:125px;width:284px;height:27px;background:#f8c91e"></div>
<div class="t" style="left:459px;top:133.3px;color:#333">Заказ поставщику</div>
<div class="t" style="left:459px;top:161.3px">Поступление товаров</div>
<div class="t" style="left:459px;top:189.3px">Выполнить приемку</div>
<div class="t" style="left:459px;top:217.3px">Расходный кассовый ордер</div>
<div class="t" style="left:459px;top:245.3px">Регистрация безналичной оплаты</div>




</body></html>
